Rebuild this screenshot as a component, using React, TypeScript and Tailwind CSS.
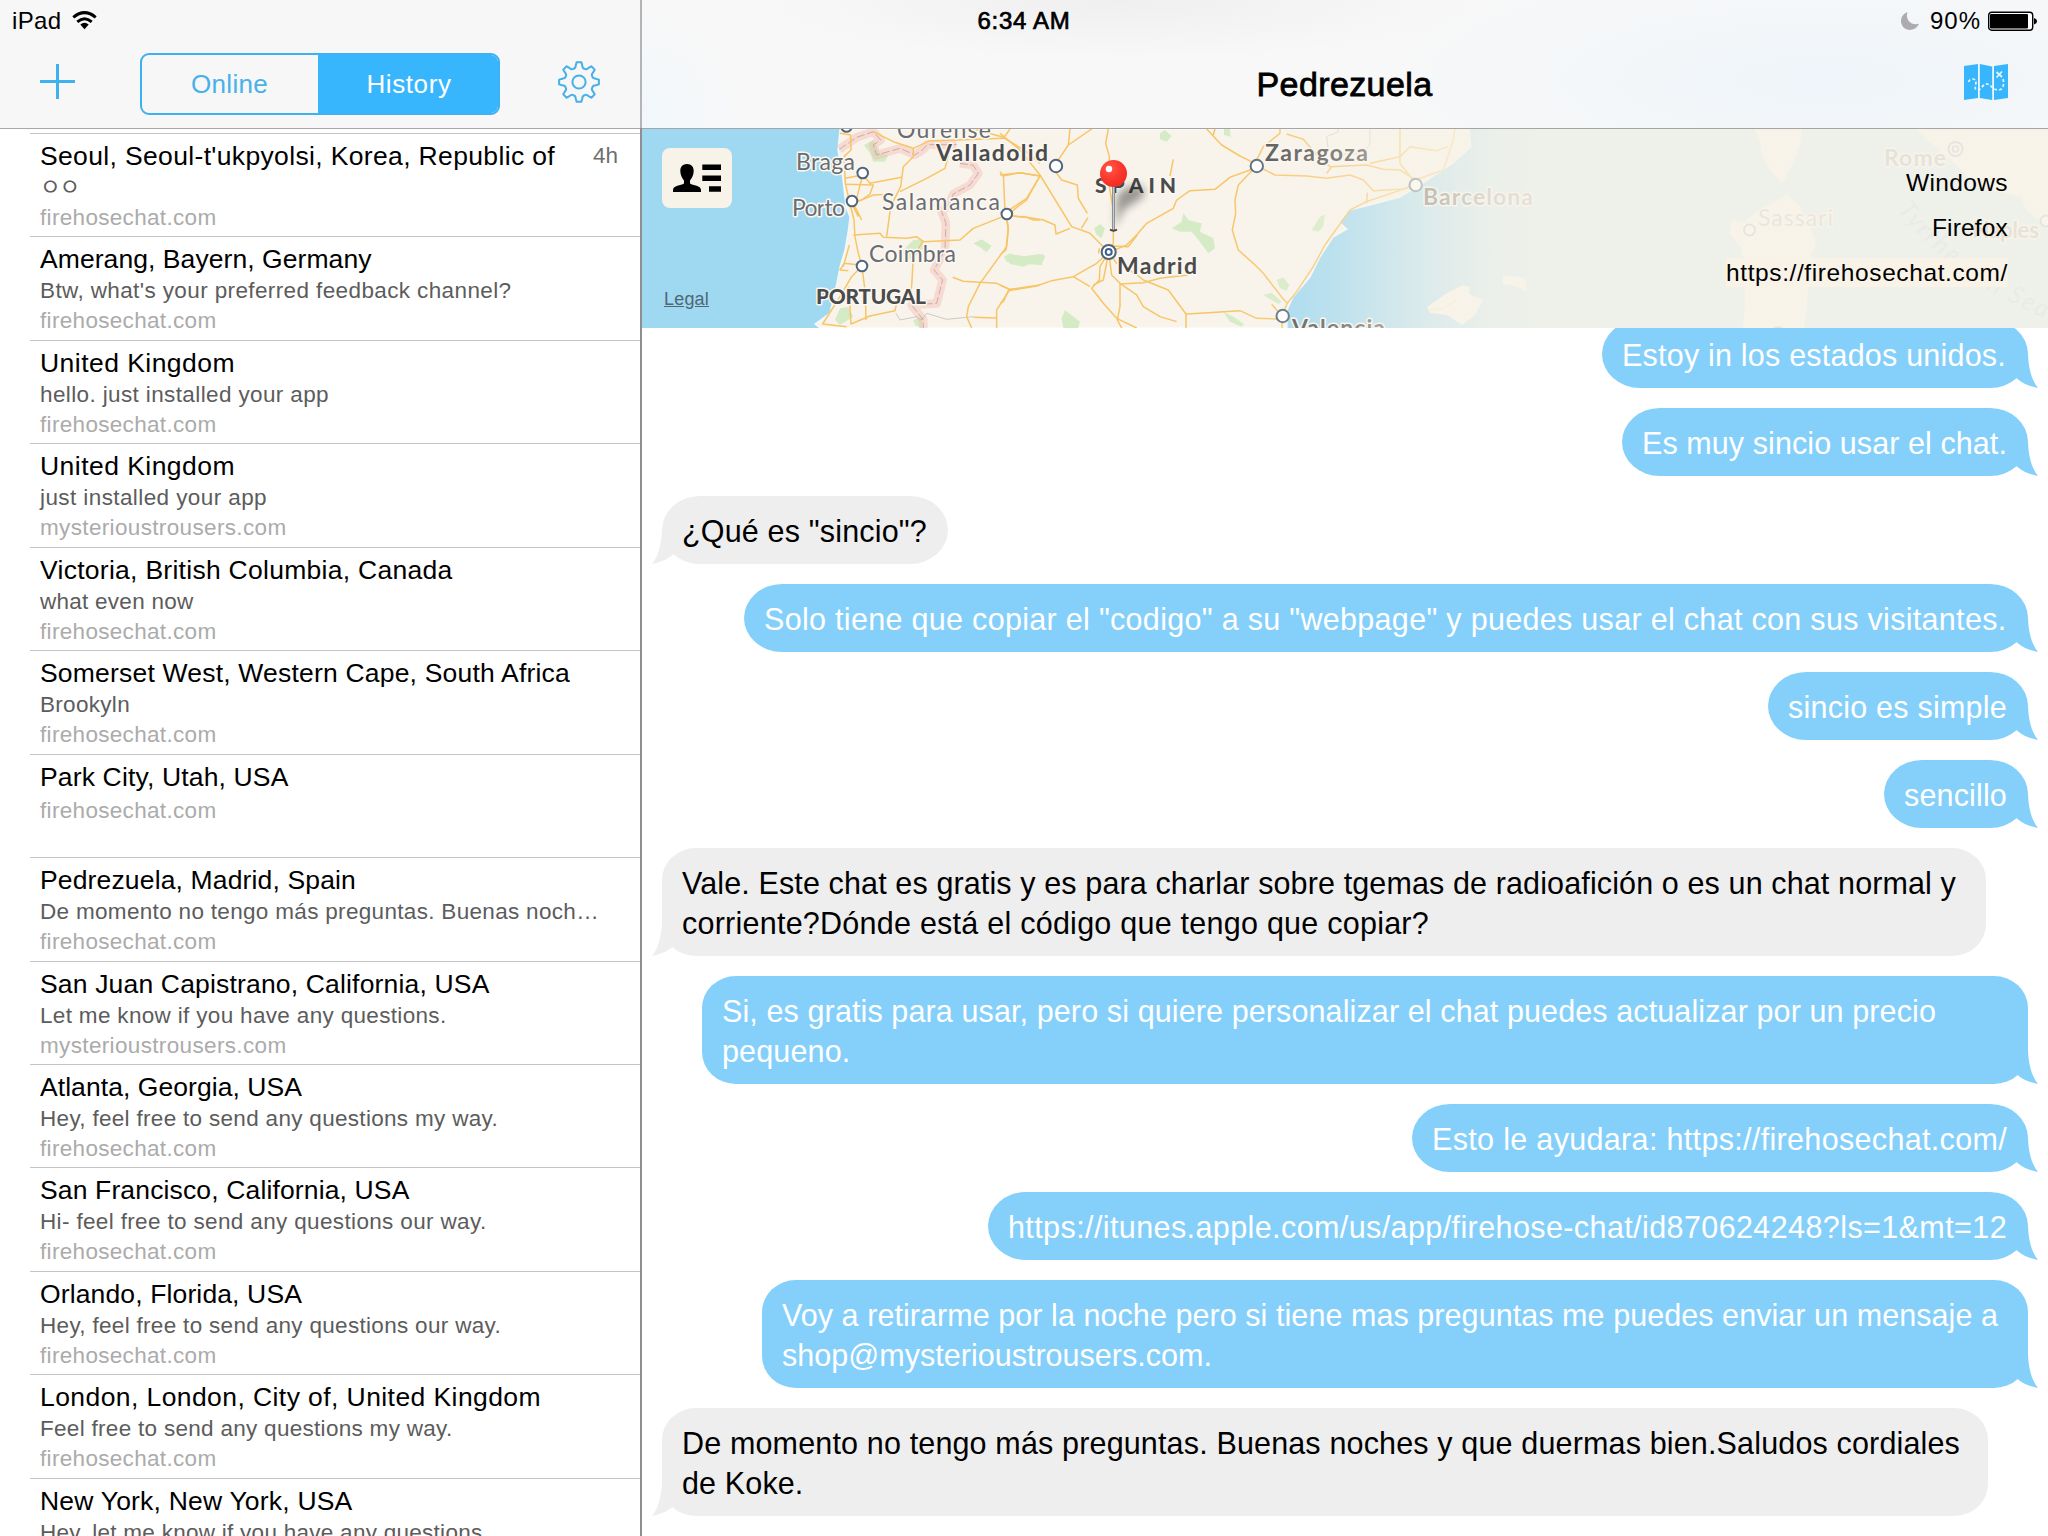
import { useLayoutEffect, useRef } from "react";

/* Spreads a single line of text over a given advance width. */
function Fit({ w, children, className = "" }: { w: number; children: string; className?: string }) {
  const ref = useRef<HTMLSpanElement>(null);
  useLayoutEffect(() => {
    const el = ref.current;
    if (!el) return;
    el.style.letterSpacing = "0px";
    const natural = el.getBoundingClientRect().width;
    el.style.letterSpacing = `${(w - natural) / children.length}px`;
  }, [w, children]);
  return (
    <span ref={ref} className={`inline-block whitespace-pre ${className}`}>
      {children}
    </span>
  );
}

type Row = { title: string; tw: number; preview?: string; pw?: number; site: string; time?: string };
const FH = "firehosechat.com";
const MT = "mysterioustrousers.com";

const rows: Row[] = [
  { title: "Seoul, Seoul-t'ukpyolsi, Korea, Republic of", tw: 515, preview: "ㅇㅇ", pw: 39, site: FH, time: "4h" },
  { title: "Amerang, Bayern, Germany", tw: 331.5, preview: "Btw, what's your preferred feedback channel?", pw: 471.5, site: FH },
  { title: "United Kingdom", tw: 195, preview: "hello. just installed your app", pw: 289, site: FH },
  { title: "United Kingdom", tw: 195, preview: "just installed your app", pw: 227, site: MT },
  { title: "Victoria, British Columbia, Canada", tw: 412.5, preview: "what even now", pw: 153.5, site: FH },
  { title: "Somerset West, Western Cape, South Africa", tw: 530, preview: "Brookyln", pw: 90, site: FH },
  { title: "Park City, Utah, USA", tw: 248.5, site: FH },
  { title: "Pedrezuela, Madrid, Spain", tw: 316, preview: "De momento no tengo más preguntas. Buenas noch…", pw: 559, site: FH },
  { title: "San Juan Capistrano, California, USA", tw: 449.5, preview: "Let me know if you have any questions.", pw: 406.500, site: MT },
  { title: "Atlanta, Georgia, USA", tw: 262, preview: "Hey, feel free to send any questions my way.", pw: 458, site: FH },
  { title: "San Francisco, California, USA", tw: 369.5, preview: "Hi- feel free to send any questions our way.", pw: 446.5, site: FH },
  { title: "Orlando, Florida, USA", tw: 262, preview: "Hey, feel free to send any questions our way.", pw: 461, site: FH },
  { title: "London, London, City of, United Kingdom", tw: 501, preview: "Feel free to send any questions my way.", pw: 412.5, site: FH },
  { title: "New York, New York, USA", tw: 312.5, preview: "Hey, let me know if you have any questions.", pw: 449, site: FH },
];

function ListRow({ row }: { row: Row }) {
  return (
    <li className="ml-[30px] h-[103.45px] shrink-0 border-t border-[#c4c4c8] pl-[10px] pr-[22px] pt-[7px]">
      <div className="flex items-start justify-between">
        <Fit w={row.tw} className="text-[26.5px] leading-[30px] text-black">{row.title}</Fit>
        {row.time && <span className="text-[22.5px] leading-[30px] text-[#6e6e6e]">{row.time}</span>}
      </div>
      {row.preview ? (
        <div className="mt-[2px] h-[30px] leading-[30px]">
          <Fit w={row.pw ?? 0} className="text-[22.5px] leading-[30px] text-[#5c5c5c]">{row.preview}</Fit>
        </div>
      ) : (
        <div className="h-[4px]" />
      )}
      <div className="h-[30px]">
        <Fit w={row.site === FH ? 176.5 : 246.5} className="text-[22.5px] leading-[30px] text-[#ababab]">{row.site}</Fit>
      </div>
    </li>
  );
}

type Message = { from: "me" | "them"; width: string; lines: [string, number][] };
const messages: Message[] = [
  { from: "me", width: "w-[426px]", lines: [["Estoy in los estados unidos.", 384]] },
  { from: "me", width: "w-[406px]", lines: [["Es muy sincio usar el chat.", 365]] },
  { from: "them", width: "w-[286px]", lines: [['¿Qué es "sincio"?', 245]] },
  { from: "me", width: "w-[1284px]", lines: [['Solo tiene que copiar el "codigo" a su "webpage" y puedes usar el chat con sus visitantes.', 1242.5]] },
  { from: "me", width: "w-[260px]", lines: [["sincio es simple", 219]] },
  { from: "me", width: "w-[144px]", lines: [["sencillo", 103]] },
  {
    from: "them",
    width: "w-[1324px]",
    lines: [
      ["Vale. Este chat es gratis y es para charlar sobre tgemas de radioafición o es un chat normal y", 1274],
      ["corriente?Dónde está el código que tengo que copiar?", 747],
    ],
  },
  {
    from: "me",
    width: "w-[1326px]",
    lines: [
      ["Si, es gratis para usar, pero si quiere personalizar el chat puedes actualizar por un precio", 1214],
      ["pequeno.", 128.5],
    ],
  },
  { from: "me", width: "w-[616px]", lines: [["Esto le ayudara: https://firehosechat.com/", 575]] },
  { from: "me", width: "w-[1040px]", lines: [["https://itunes.apple.com/us/app/firehose-chat/id870624248?ls=1&mt=12", 999]] },
  {
    from: "me",
    width: "w-[1266px]",
    lines: [
      ["Voy a retirarme por la noche pero si tiene mas preguntas me puedes enviar un mensaje a", 1216],
      ["shop@mysterioustrousers.com.", 430],
    ],
  },
  {
    from: "them",
    width: "w-[1326px]",
    lines: [
      ["De momento no tengo más preguntas. Buenas noches y que duermas bien.Saludos cordiales", 1278],
      ["de Koke.", 121.5],
    ],
  },
];

function Bubble({ m }: { m: Message }) {
  const me = m.from === "me";
  const radius = m.lines.length > 1 ? "rounded-[34px/32px]" : "rounded-[38px/34px]";
  return (
    <div
      className={`relative shrink-0 px-5 pb-[13px] pt-[15px] ${m.width} ${radius} ${
        me ? "self-end bg-[#85d0fb] text-white" : "self-start bg-[#eeeeee] text-black"
      }`}
    >
      <svg
        viewBox="0 0 28 34"
        className={`absolute bottom-0 h-[34px] w-[28px] ${
          me ? "right-[-10px] fill-[#85d0fb]" : "left-[-10px] -scale-x-100 fill-[#eeeeee]"
        }`}
      >
        <path d="M18 0C18.5 14 21.5 26 28 34C21 32.5 13 30 7.5 25L0 12V0Z" />
      </svg>
      {m.lines.map(([text, w]) => (
        <div key={text} className="relative h-10">
          <Fit w={w} className="text-[30.5px] leading-10">{text}</Fit>
        </div>
      ))}
    </div>
  );
}

function gearPath() {
  const pts: string[] = [];
  const p = (r: number, a: number) => `${(22 + r * Math.cos(a)).toFixed(2)} ${(22 + r * Math.sin(a)).toFixed(2)}`;
  for (let k = 0; k < 8; k++) {
    const a = (k * Math.PI) / 4;
    pts.push(`${k ? "L" : "M"}${p(20, a - 0.12)}`);
    pts.push(`L${p(20, a + 0.12)}`);
    pts.push(`L${p(17, a + 0.19)}`);
    pts.push(`Q${p(14, a + 0.25)} ${p(14.4, a + 0.393)}`);
    pts.push(`Q${p(14, a + 0.535)} ${p(17, a + 0.595)}`);
  }
  return pts.join("") + "Z";
}

function City({ x, y, r = 5.3 }: { x: number; y: number; r?: number }) {
  return <circle cx={x} cy={y} r={r} fill="#fff" stroke="#50657c" strokeWidth="2" />;
}

function Label({ x, y, w, children, bold, semi }: { x: number; y: number; w: number; children: string; bold?: boolean; semi?: boolean }) {
  return (
    <text
      x={x}
      y={y}
      textLength={w}
      fontSize={bold ? 21 : 23}
      fontWeight={bold ? 900 : semi ? 700 : 400}
      fill={bold || semi ? "#4b4b4d" : "#6a6c72"}
      stroke="#fbf8f1"
      strokeWidth="3"
      strokeLinejoin="round"
      paintOrder="stroke"
    >
      {children}
    </text>
  );
}

function MapView() {
  return (
    <svg viewBox="642 129 1406 199" className="absolute inset-0 h-full w-full font-[Lato,sans-serif]">
      <defs>
        <linearGradient id="fade" gradientUnits="userSpaceOnUse" x1="1220" x2="1540" y1="0" y2="0">
          <stop offset="0" stopColor="#f8f3e7" stopOpacity="0" />
          <stop offset="0.35" stopColor="#f8f3e7" stopOpacity="0.32" />
          <stop offset="0.6" stopColor="#f8f3e7" stopOpacity="0.64" />
          <stop offset="0.85" stopColor="#f7f3e9" stopOpacity="0.87" />
          <stop offset="1" stopColor="#f7f3e9" stopOpacity="0.9" />
        </linearGradient>
        <radialGradient id="pin" cx="0.35" cy="0.3" r="0.8">
          <stop offset="0" stopColor="#ff5a4a" />
          <stop offset="0.5" stopColor="#fb3a2e" />
          <stop offset="1" stopColor="#f0281f" />
        </radialGradient>
        <filter id="soft" x="-50%" y="-50%" width="200%" height="200%">
          <feGaussianBlur stdDeviation="4.5" />
        </filter>
      </defs>
      <rect x="642" y="129" width="1406" height="199" fill="#9fd8f1" />
      <g fill="#f8f4ec">
        <path d="M840 129L838 150L843 180L846 207L850 217L848 233L845 250L840 267L837 283L830 313L815 324L820 328H1287V310L1293 297L1310 277L1320 257L1333 237L1347 229L1339 222L1350 210L1370 205L1400 197L1417 187L1453 163L1471 147L1469 129Z" stroke="#fff" strokeOpacity="0.7" strokeWidth="1.5" />
        <path d="M1427 307L1447 293L1463 285L1470 287L1469 294L1483 300L1475 315L1462 325L1447 315L1430 313Z" />
        <path d="M1503 275L1525 278L1527 291L1512 285L1503 284Z" />
        <path d="M1755 129L1760 142L1762 155L1770 170L1782 184L1792 165L1800 145L1802 129Z" />
        <path d="M1787 195L1799 205L1809 223L1816 243L1809 260L1807 307L1804 328H1743L1745 300L1743 260L1741 247L1729 233L1732 220L1745 222L1759 210Z" />
        <path d="M1916 129L1925 138L1951 160L1968 177L1989 190L2021 197L2026 210L2035 217L2048 228V129Z" />
      </g>

      <g transform="translate(640 120) scale(0.3333)" fill="none">
        <g fill="#d5ebc6">
          <path d="M672 75L700 60L720 100L745 105L735 125H700L690 100Z" />
          <path d="M790 390L820 360L845 358L850 385L820 415L795 420Z" />
          <path d="M1000 370L1025 358L1055 378L1040 397L1020 382Z" />
          <path d="M1092 410L1110 400L1140 410L1200 402L1215 408L1205 436L1130 430L1100 425Z" />
          <path d="M585 600L600 565L625 560L640 590L600 615Z" />
          <path d="M820 600L850 590L845 624L825 615Z" />
        </g>
        <g stroke="#f6b3ac" strokeOpacity="0.4" strokeWidth="26" strokeLinejoin="round">
          <path d="M598 88L650 52L700 35L722 60L700 75L710 105L780 85L825 105L850 88L862 74L950 74" />
          <path d="M960 130L1000 136L1015 160L990 195L940 222L930 250L905 275L918 310L915 390L882 450L908 480L890 550L815 555L850 600V628" />
        </g>
        <g stroke="#b9a29c" strokeWidth="2.4" strokeDasharray="24 8">
          <path d="M598 88L650 52L700 35L722 60L700 75L710 105L780 85L825 105L850 88L862 74L950 74" />
          <path d="M960 130L1000 136L1015 160L990 195L940 222L930 250L905 275L918 310L915 390L882 450L908 480L890 550L815 555L850 600V628" />
        </g>
        <path d="M768 580L780 600L830 590L845 600L860 580L920 598L1000 590" stroke="#b8b4ae" strokeWidth="2" />
        <g stroke="#f8c566" strokeWidth="4.5" strokeLinejoin="round">
          <path d="M600 40L632 45L633 90L612 110L616 190L628 242L642 300L645 350L655 400L666 438L676 520L678 600" />
          <path d="M616 175L668 165L690 190L785 172" />
          <path d="M616 193L700 195L690 222L665 240L630 250" />
          <path d="M668 165L650 235M640 250L700 225L760 222" />
          <path d="M700 35L760 65L820 85L870 62L950 60L1090 55L1110 27M1000 27L1085 50L1160 95L1200 130" />
          <path d="M820 85V110L790 140L782 200L752 260L740 350" />
          <path d="M924 110L915 145L860 175L780 215" />
          <path d="M640 345L720 340L730 352L800 355L830 350L850 365L960 360L1000 325L1098 286" />
          <path d="M850 362L820 410L815 500L805 540" />
          <path d="M666 438L635 470L600 530L548 612L620 620" />
          <path d="M660 435L612 430L600 450L625 452M628 375L610 440" />
          <path d="M626 500L633 612L690 588L765 572L770 550" />
          <path d="M645 260L665 300M640 260L655 290" />
          <path d="M1094 260L1105 330L1100 380L1020 490L985 560L980 590L995 624" />
          <path d="M938 472L970 484L1070 490L1110 508L1200 495M1110 508L1070 570V624M1000 592L1070 594" />
          <path d="M1080 155L1090 168L1140 158L1200 168M1200 168L1160 240L1130 262L1110 280" />
          <path d="M1100 286L1160 292L1180 300L1200 300" />
        </g>
      </g>

      <g transform="translate(1000 120) scale(0.3333)" fill="none">
        <g fill="#d5ebc6">
          <path d="M15 408L50 404L75 410L130 403L135 415L95 430L70 440L30 432Z" />
          <path d="M480 40L495 30L515 48L500 65L480 58Z" />
          <path d="M672 27H690L692 50L672 45Z" />
          <path d="M515 325L545 305L550 280L565 300L605 310L600 335L640 355L645 385L625 400L600 365L575 335L540 335Z" />
          <path d="M282 325L300 312L315 325L305 355L290 345Z" />
          <path d="M185 595L195 570L240 605L235 624H190Z" />
          <path d="M670 575L700 590L732 612L725 620L690 605Z" />
          <path d="M935 330L960 290L975 283L970 320L955 335Z" />
          <path d="M830 480L850 472L868 495L860 512L840 505ZM790 525L815 518L845 545L835 552Z" />
        </g>
        <path d="M1110 27V75L1090 95L1050 105L985 90L980 50L1015 35V27" stroke="#c9c5bd" strokeWidth="2" />
        <g stroke="#f8c566" strokeWidth="4.5" strokeLinejoin="round">
          <path d="M0 40L60 90L120 165L215 320L270 340L326 397" />
          <path d="M210 27L205 75L168 130M120 168L80 235L20 275M205 75L275 27" />
          <path d="M0 165L60 158L120 168" />
          <path d="M168 157L185 180L232 195L235 235L262 280M264 293L244 325" />
          <path d="M325 27L317 70L328 110V200L340 270V370L326 397" />
          <path d="M520 118L510 168" />
          <path d="M10 165L15 275L25 320L18 390L0 405" />
          <path d="M20 287L80 292L130 300L165 315L168 342L210 325" />
          <path d="M326 397L380 375L410 345L440 310L520 265L530 240L570 212L645 208L690 172L765 145" />
          <path d="M340 378L385 380L412 345" />
          <path d="M620 27L665 75L720 108L765 130L790 80L840 40V27M640 45L645 27" />
          <path d="M770 137L715 195L705 240L707 280L697 330L715 390L760 430L790 460L848 535L862 550" />
          <path d="M770 137L825 165L920 168L980 175L1050 165L1090 180L1120 212L1210 207L1247 195" />
          <path d="M1247 195L1100 245L1050 270L975 375L940 440L890 515L862 550L846 588V624" />
          <path d="M860 42L910 58L955 110L990 140L1100 135L1150 148L1200 150L1247 180L1330 150L1360 60L1365 27" />
          <path d="M1200 27V130L1247 190M1110 130L1200 110L1230 80L1310 92L1345 80M980 160L995 140M1102 218L1100 250" />
          <path d="M326 397L290 430L220 470L155 482L110 498L25 512L10 545L0 550" />
          <path d="M326 397L300 440L298 480L275 505L310 550L350 595L410 624M326 397L310 480L280 495" />
          <path d="M326 397L335 465L360 490L410 525L430 560L480 590L530 605M360 490V560L352 600L365 624" />
          <path d="M326 397L350 430L405 460L430 480L505 510L558 582V624M360 492L430 488L480 475L565 465" />
          <path d="M558 582L600 580L720 572L770 595L835 597M815 553L846 588M220 470L270 500" />
          <path d="M0 495L35 512M296 400L298 385" />
        </g>
        <path d="M1290 570L1330 565L1370 540" stroke="#f8dfae" strokeWidth="4" />
      </g>

      <City x={846.5} y={126.5} />
      <City x={862.7} y={173} />
      <City x={852} y={201} />
      <City x={862} y={266} />
      <City x={1006.8} y={214} />
      <City x={1056} y={166} r={6.2} />
      <City x={1256.8} y={166} r={6.2} />
      <City x={1415.7} y={185} r={6.2} />
      <City x={1282.7} y={316} r={6.2} />
      <City x={1749.5} y={230} r={5.5} />
      <City x={1955.5} y={149} r={7} />
      <circle cx={1955.5} cy={149} r={3} fill="none" stroke="#50657c" strokeWidth="1.7" />
      <City x={2046} y={221} r={5.5} />
      <City x={1778} y={333} r={6} />
      <City x={1108.7} y={252} r={7} />
      <circle cx={1108.7} cy={252} r={3} fill="#fff" stroke="#3d5f8f" strokeWidth="2" />

      <Label x={897} y={137.5} w={94}>Ourense</Label>
      <Label x={796} y={169.5} w={59}>Braga</Label>
      <Label x={792} y={216} w={53}>Porto</Label>
      <Label x={869} y={262} w={87}>Coimbra</Label>
      <Label x={882} y={210} w={118}>Salamanca</Label>
      <Label x={936} y={161} w={112} semi>Valladolid</Label>
      <Label x={816} y={303.5} w={110} bold>PORTUGAL</Label>
      <Label x={1095} y={192.5} w={81} bold>SPAIN</Label>
      <Label x={1117} y={273.5} w={80} semi>Madrid</Label>
      <Label x={1265} y={161} w={103} semi>Zaragoza</Label>
      <Label x={1423} y={205} w={110} semi>Barcelona</Label>
      <Label x={1292} y={336} w={93} semi>Valencia</Label>
      <Label x={1884} y={166} w={62} semi>Rome</Label>
      <Label x={1758} y={226} w={75}>Sassari</Label>
      <Label x={1972} y={238} w={67} semi>Naples</Label>
      <path id="sea" d="M1897 210Q1950 280 2060 325" fill="none" />
      <text fontSize="25" fill="#5f9fcb" fontStyle="italic" textLength="185">
        <textPath href="#sea">Tyrrhenian Sea</textPath>
      </text>

      <rect x="1220" y="129" width="828" height="199" fill="url(#fade)" />

      <path d="M1117 196Q1124 186 1136 185Q1147 186 1143 197Q1134 204 1124 209L1115 228Z" fill="#000" opacity="0.38" filter="url(#soft)" />
      <rect x="1112" y="184" width="3" height="47" fill="#8f9194" />
      <rect x="1113" y="184" width="1" height="47" fill="#c9cbce" />
      <path d="M1110 229.5Q1113.500 232 1117 229.500" stroke="#4a4238" strokeWidth="2" fill="none" />
      <circle cx="1113.500" cy="173.500" r="13.500" fill="url(#pin)" />
      <circle cx="1109" cy="169" r="3.200" fill="#fff" />
    </svg>
  );
}

function StatusWifi() {
  return (
    <svg viewBox="0 0 25 19" className="h-[19px] w-[25px]" fill="none" stroke="#000" strokeWidth="3">
      <path d="M1.300 6.300Q12.500 -3 23.700 6.300" />
      <path d="M5.300 10.800Q12.500 4.600 19.700 10.800" />
      <path d="M8.300 13.500Q12.500 10 16.700 13.500L12.500 18.200Z" fill="#000" stroke="none" />
    </svg>
  );
}

export default function App() {
  return (
    <div className="flex h-[1536px] w-[2048px] overflow-hidden bg-white font-['Liberation_Sans','Noto_Sans_CJK_KR',sans-serif] text-black">
      <aside className="flex w-[640px] shrink-0 flex-col overflow-hidden">
        <header className="flex h-[129px] shrink-0 flex-col border-b border-[#a8a8ab] bg-[#f7f7f7]">
          <div className="flex h-[40px] items-center pl-3 pt-[1px]">
            <Fit w={49.5} className="text-[24px] leading-[28px]">iPad</Fit>
            <div className="ml-[10.5px]">
              <StatusWifi />
            </div>
          </div>
          <div className="flex h-[88px] items-center pb-[1px]">
            <svg viewBox="0 0 36 36" className="ml-[40px] mt-[-4px] h-[36px] w-[36px]" stroke="#3fb1ee" strokeWidth="3">
              <path d="M17.500 0V35M0 17.500H35" />
            </svg>
            <div className="ml-[64px] flex h-[62px] w-[360px] overflow-hidden rounded-[9px] border-2 border-[#3db2f2] text-[26px] leading-[30px]">
              <div className="flex w-[176px] items-center justify-center pr-[1px] pt-[1px] text-[#47b1ea]">
                <Fit w={77}>Online</Fit>
              </div>
              <div className="flex flex-1 items-center justify-center bg-[#38b6fd] pl-[2px] pt-[1px] text-white">
                <Fit w={85}>History</Fit>
              </div>
            </div>
            <svg viewBox="0 0 44 44" className="ml-[57px] mt-[-4px] h-[44px] w-[44px]" fill="none" stroke="#45b0ea" strokeWidth="2" strokeLinejoin="round">
              <path d={gearPath()} />
              <circle cx="22" cy="22" r="6.600" />
            </svg>
          </div>
        </header>
        <ul className="flex flex-1 flex-col overflow-hidden pt-[4px]">
          {rows.map((row, i) => (
            <ListRow key={i} row={row} />
          ))}
        </ul>
      </aside>

      <div className="w-[2px] shrink-0 bg-[linear-gradient(#b3b3b8_0_128px,#8e8e93_128px)]" />

      <main className="flex min-w-0 flex-1 flex-col">
        <header className="h-[129px] shrink-0 border-b border-[#a5a5a5] bg-[radial-gradient(ellipse_360px_60px_at_480px_0px,#efefef,#efefef00),radial-gradient(ellipse_460px_130px_at_1180px_80px,#eff5fa,#eff5fa00),radial-gradient(ellipse_100px_100px_at_0px_110px,#f1f7fb,#f1f7fb00)] bg-[#f8f8f8]">
          <div className="flex h-[40px] items-center pt-[1px]">
            <div className="ml-[335.5px] text-[24px] leading-[28px] [-webkit-text-stroke:0.7px_black]">
              <Fit w={93}>6:34 AM</Fit>
            </div>
            <div className="ml-auto flex items-center pr-[10px]">
              <svg viewBox="0 0 20 20" className="mr-[10px] h-[20px] w-[20px] fill-[#acacae]">
                <path d="M7.500 1C5 8 10.500 15 19 12.800C17 17 13.500 19 10 19C5 19 1 15 1 10C1 6 3.500 2.500 7.500 1Z" />
              </svg>
              <Fit w={51} className="text-[24px] leading-[28px]">90%</Fit>
              <svg viewBox="0 0 50 20" className="ml-[7px] h-[20px] w-[50px]">
                <rect x="0.700" y="1.200" width="44" height="18" rx="3" fill="#fff" stroke="#000" strokeWidth="1.400" />
                <rect x="2" y="3" width="38" height="14.500" rx="1" fill="#000" />
                <path d="M46 7Q49 8 49 10.200T46 13.500Z" fill="#000" />
              </svg>
            </div>
          </div>
          <div className="flex h-[88px] items-center">
            <div className="ml-[614.5px] text-[34px] leading-[40px] [-webkit-text-stroke:0.8px_black]">
              <Fit w={176}>Pedrezuela</Fit>
            </div>
            <svg viewBox="0 0 44 36" className="ml-auto mr-[40px] mt-[-4px] h-[36px] w-[44px]">
              <path d="M0 2L14 0V34L0 36ZM15.800 0L28.200 2.500V36L15.800 34ZM30 2L44 0V34L30 36Z" fill="#38b6fd" />
              <path d="M4.500 18C5.500 14 12 14 12 18C12 21 9.500 26 13.500 26C17 26 19 19.500 23 20C27 20.500 29 26 34 26C40 26 40.500 19 38.500 13" fill="none" stroke="#e6f7ff" strokeWidth="1.700" strokeDasharray="3 2" />
              <path d="M32.500 8L38 13M38 7.500L32.500 13.500" stroke="#e6f7ff" strokeWidth="1.700" />
            </svg>
          </div>
        </header>

        <section className="relative h-[199px] shrink-0 overflow-hidden">
          <MapView />
          <button className="absolute left-[20px] top-[19px] flex h-[60px] w-[70px] items-center justify-center rounded-[8px] bg-[#f8f3e8]">
            <svg viewBox="0 0 48 28" className="h-[28px] w-[48px]" fill="#000">
              <path d="M14 0C9.500 0 7.300 3 7.300 7C7.300 11 9 14 11 16.500V19.500C8 21.500 0 21.500 0 26V28H28V26C28 21.500 20 21.500 17 19.500V16.500C19 14 20.700 11 20.700 7C20.700 3 18.500 0 14 0Z" />
              <path d="M29.300 0.500H48V6H29.300ZM29.300 11.500H48V17H29.300ZM36 22.300H48V27.800H36Z" />
            </svg>
          </button>
          <span className="absolute left-[22px] top-[159px] text-[18px] leading-[22px] text-[#4f6775] underline">
            <Fit w={45} className="underline">Legal</Fit>
          </span>
          <div className="absolute right-[40px] top-[39px] flex flex-col items-end gap-4 text-[24.5px] leading-[29px]">
            <Fit w={102}>Windows</Fit>
            <Fit w={76}>Firefox</Fit>
            <Fit w={282} className="bg-[#f9f3e7]">https://firehosechat.com/</Fit>
          </div>
        </section>

        <section className="flex flex-1 flex-col gap-5 overflow-hidden pl-5 pr-5">
          <div className="-mt-7 h-0 shrink-0" />
          {messages.map((m, i) => (
            <Bubble key={i} m={m} />
          ))}
        </section>
      </main>
    </div>
  );
}
